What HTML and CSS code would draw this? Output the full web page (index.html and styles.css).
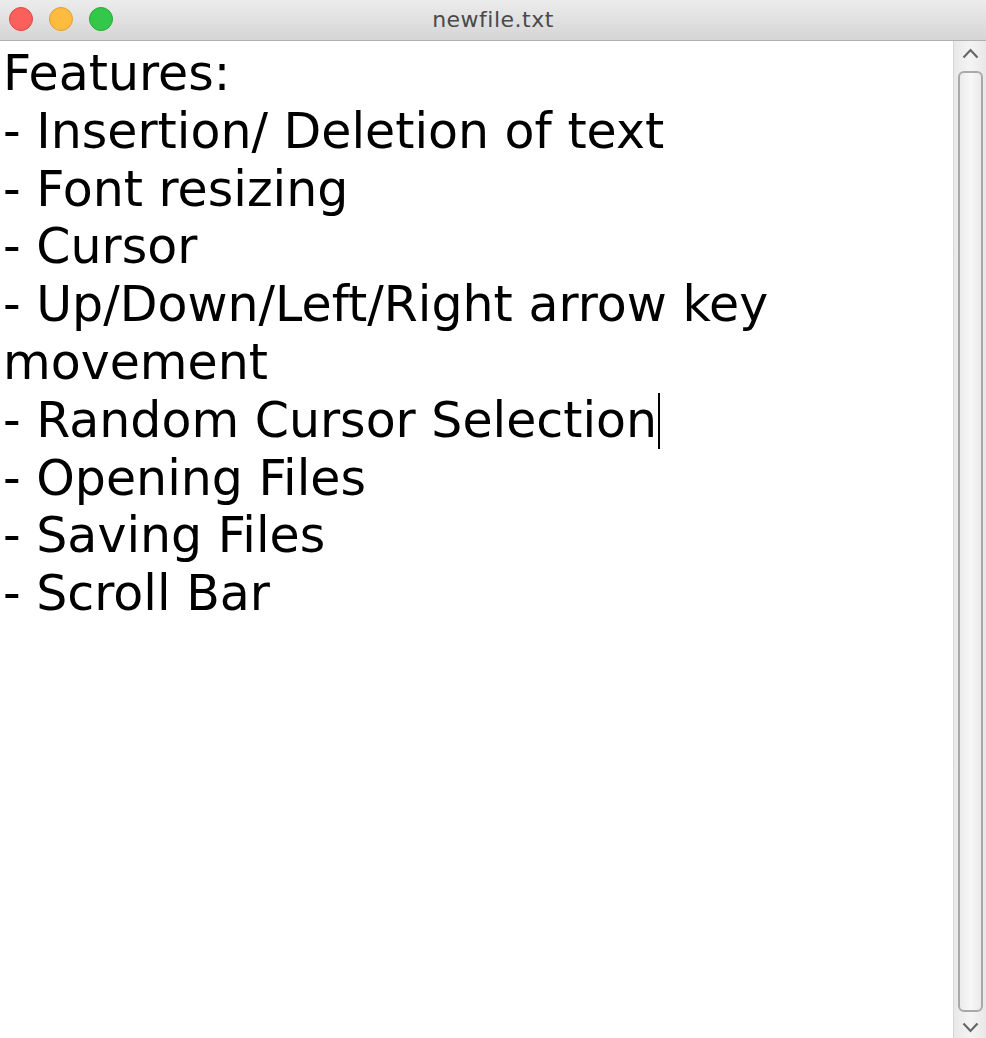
FILE: index.html
```html
<!DOCTYPE html>
<html>
<head>
<meta charset="utf-8">
<link rel="stylesheet" href="styles.css">
</head>
<body>
<div class="window">
  <div class="titlebar">
    <div class="lights">
      <span class="light red"></span>
      <span class="light yellow"></span>
      <span class="light green"></span>
    </div>
    <div class="title">newfile.txt</div>
  </div>
  <div class="content">
    <div class="editor">
      <div class="line">Features:</div>
      <div class="line">- Insertion/ Deletion of text</div>
      <div class="line">- Font resizing</div>
      <div class="line">- Cursor</div>
      <div class="line">- Up/Down/Left/Right arrow key</div>
      <div class="line">movement</div>
      <div class="line">- Random Cursor Selection<span class="caret"></span></div>
      <div class="line">- Opening Files</div>
      <div class="line">- Saving Files</div>
      <div class="line">- Scroll Bar</div>
    </div>
    <div class="scrollbar">
      <svg class="arrow" width="17" height="11" viewBox="0 0 17 11"><path d="M1.5 9.5 L8.5 2 L15.5 9.5" fill="none" stroke="#666" stroke-width="2.2"/></svg>
      <div class="thumb"></div>
      <svg class="arrow" width="17" height="11" viewBox="0 0 17 11"><path d="M1.5 1.5 L8.5 9 L15.5 1.5" fill="none" stroke="#666" stroke-width="2.2"/></svg>
    </div>
  </div>
</div>
</body>
</html>
```
FILE: styles.css
```css
html, body {
  margin: 0;
  padding: 0;
  width: 986px;
  height: 1038px;
  overflow: hidden;
  background: #fff;
}
.window {
  display: flex;
  flex-direction: column;
  height: 1038px;
}
.titlebar {
  position: relative;
  height: 41px;
  box-sizing: border-box;
  background: linear-gradient(#ececec, #d5d5d5);
  border-bottom: 1px solid #b0b0b0;
  display: flex;
  align-items: center;
  justify-content: center;
}
.lights {
  position: absolute;
  left: 9px;
  top: 7px;
  display: flex;
  gap: 16px;
}
.light {
  width: 24px;
  height: 24px;
  border-radius: 50%;
  box-sizing: border-box;
}
.red { background: #fc605c; border: 1px solid #df4744; }
.yellow { background: #fdbc40; border: 1px solid #de9f34; }
.green { background: #34c84a; border: 1px solid #27aa35; }
.title {
  font-family: "DejaVu Sans", sans-serif;
  font-size: 22px;
  letter-spacing: 0.5px;
  color: #4a4a4a;
  margin-top: -1px;
}
.content {
  flex: 1;
  display: flex;
  min-height: 0;
}
.editor {
  flex: 1;
  padding: 4px 0 0 3px;
  font-family: "DejaVu Sans", sans-serif;
  font-size: 49px;
  line-height: 57.8px;
  color: #000;
}
.line {
  white-space: pre;
}
.caret {
  display: inline-block;
  width: 2px;
  height: 56px;
  background: #000;
  vertical-align: -12px;
  margin-left: 1px;
}
.scrollbar {
  width: 33px;
  box-sizing: border-box;
  border-left: 1px solid #d6d6d6;
  background: linear-gradient(to right, #e8e8e8, #f4f4f4, #e8e8e8);
  display: flex;
  flex-direction: column;
  align-items: center;
  padding: 7px 0 5px 1px;
}
.arrow {
  display: block;
  flex: none;
}
.thumb {
  flex: 1;
  width: 25px;
  margin: 12px 0 10px;
  box-sizing: border-box;
  border: 2px solid #a9a9a9;
  border-radius: 6px;
  background: linear-gradient(to right, #ebebeb, #f7f7f7, #ebebeb);
}
```
